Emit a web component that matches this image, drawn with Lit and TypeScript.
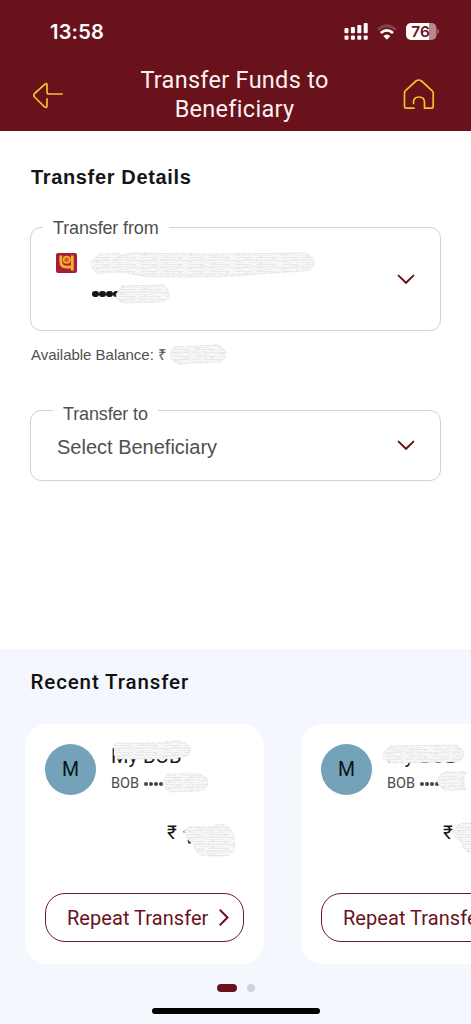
import { LitElement, html, css, svg } from "lit";
import { customElement, property } from "lit/decorators.js";

/* Grey hatched blob that hides a private value. */
@customElement("redaction-mark")
export class RedactionMark extends LitElement {
  @property() shape = "";
  @property({ type: Number }) w = 50;
  @property({ type: Number }) h = 20;

  static styles = css`
    :host { display: block; line-height: 0; }
    svg { display: block; overflow: visible; }
  `;

  render() {
    return html`<svg width=${this.w} height=${this.h} viewBox="0 0 ${this.w} ${this.h}">
      <defs>
        <pattern id="hatch" width="47" height="7" patternUnits="userSpaceOnUse">
          <rect width="47" height="7" fill="#f7f7f7" />
          <path d="M0 .5H19M22 .5H31M34 .5H47M3 4.5H20M24 4.5H45" stroke="#e6e6e6" stroke-width=".8" />
          <path d="M0 2.500H13M17 2.500H40M11 6.500H37" stroke="#eeeeee" stroke-width=".9" />
          <path d="M5 1.500H7M28 3.500H29.500M41 5.500H43M15 5.500H16" stroke="#dadada" stroke-width=".8" />
        </pattern>
      </defs>
      <path d=${this.shape} fill="url(#hatch)" stroke="#d9d9d9" stroke-width=".7" stroke-dasharray="3 1 1 1.500" stroke-linejoin="round" />
    </svg>`;
  }
}

const chevronDown = html`<svg class="chev" width="18" height="11" viewBox="0 0 18 11" fill="none">
  <path d="M1.600 1.600 9 8.800l7.400-7.200" stroke="#6a121c" stroke-width="1.900" stroke-linecap="round" stroke-linejoin="miter" />
</svg>`;

interface Mask { x: number; y: number; w: number; h: number; d: string; }

@customElement("recent-card")
export class RecentCard extends LitElement {
  @property({ attribute: false }) masks: Mask[] = [];
  @property({ type: Boolean }) specks = false;

  static styles = css`
    :host {
      position: relative; box-sizing: border-box; flex: none; width: 239px; height: 240px;
      padding: 20px 20px 22px; border-radius: 22px; background: #fff;
      display: flex; flex-direction: column; font-family: Roboto, sans-serif;
    }
    .who { display: flex; gap: 15px; height: 51px; }
    .avatar {
      width: 51px; height: 51px; border-radius: 50%; background: #74a3b9; color: #0c1215;
      display: flex; align-items: center; justify-content: center; font-size: 19.5px;
    }
    .name { font-size: 20px; line-height: 24px; color: #161616; letter-spacing: 0; }
    .bank { display: flex; align-items: center; font-size: 14.5px; line-height: 18px; color: #4c4c4c; padding-top: 6.5px; }
    .bullets { display: flex; gap: 1px; margin-left: 4.5px; }
    .bullets i { width: 4px; height: 4px; border-radius: 50%; background: #444; }
    .amount { display: flex; margin: 26px 0 0 122px; font-size: 19px; line-height: 24px; height: 24px; color: #161616; white-space: nowrap; }
    .amount svg { margin: 8px 0 0 5.5px; }
    .repeat {
      margin-top: auto; box-sizing: border-box; width: 199px; height: 49px; border-radius: 20px;
      border: 1.3px solid #6f1822; background: none; color: #6b121d; padding: 0 14px 0 21px;
      display: flex; align-items: center; justify-content: space-between;
      font: 20px Roboto, sans-serif; letter-spacing: .05px; white-space: nowrap;
    }
    .mask { position: absolute; }
  `;

  render() {
    return html`
      <div class="who">
        <div class="avatar">M</div>
        <div>
          <div class="name">My BOB</div>
          <div class="bank">BOB<span class="bullets"><i></i><i></i><i></i><i></i></span></div>
        </div>
      </div>
      <div class="amount">₹${this.specks
        ? html`<svg width="10" height="16" viewBox="0 0 10 16"><path d="M1.500 2 5 0V3.500H1.500zM5.500 11H9V14.500H6.500z" fill="#161616" /></svg>`
        : null}</div>
      <button class="repeat">Repeat Transfer
        <svg width="10" height="17" viewBox="0 0 10 17" fill="none"><path d="M1.300 1.300 8.500 8.500l-7.200 7.200" stroke="#6b121d" stroke-width="2" stroke-linecap="round" /></svg>
      </button>
      ${this.masks.map((m) => html`<redaction-mark class="mask" style="left:${m.x}px;top:${m.y}px" .w=${m.w} .h=${m.h} .shape=${m.d}></redaction-mark>`)}
    `;
  }
}

const firstMasks: Mask[] = [
  { x: 88, y: 17, w: 78, h: 18, d: "M1 5Q3 1 8 2L45 2 62 0Q72 0 77 6 79 12 74 15L60 18 5 18 1 14Z" },
  { x: 138, y: 49, w: 45, h: 20, d: "M4 2Q10 0 36 1 45 4 45 9 44 17 37 18L8 19Q1 17 0 10Z" },
  { x: 159, y: 99, w: 51, h: 34, d: "M0 8 5 4 29 4Q35-1 43 3 50 7 50 17L51 22Q50 32 42 33L20 33Q11 31 10 22L4 17Z" },
];
const secondMasks: Mask[] = [
  { x: 82, y: 21, w: 81, h: 18, d: "M7 1 73 0Q81 4 81 10 79 16 74 17L7 18Q0 15 0 9Z" },
  { x: 136, y: 48, w: 29, h: 18, d: "M0 9Q2 3 8 0L29 0 27 5V13L29 18 8 18Q2 15 0 9Z" },
  { x: 152, y: 99, w: 30, h: 30, d: "M0 9Q2 1 12 0H30V30H18Q10 28 8 18 2 17 0 9Z" },
];

@customElement("app-root")
export class AppRoot extends LitElement {
  static styles = css`
    :host {
      display: flex; flex-direction: column; width: 471px; height: 1024px; overflow: hidden;
      background: #fff; font-family: "Liberation Sans", Arial, sans-serif;
    }
    header { height: 131px; background: #69121b; color: #fff; flex: none; box-sizing: border-box; padding-top: 20px; }
    .status { display: flex; align-items: center; height: 23px; padding: 0 32px 0 50px; }
    .time { flex: 1; font: 600 20px Inter, sans-serif; letter-spacing: .2px; }
    .status svg { display: block; }
    .title-row { display: flex; justify-content: space-between; padding: 23px 36px 0 32px; }
    .title-row svg { display: block; }
    .back { margin-top: 16px; }
    .home { margin-top: 12px; }
    h1 { margin: 0; font: 400 23.5px/29px Roboto, sans-serif; letter-spacing: .28px; text-align: center; color: #fbf1f2; padding-left: 2px; }
    main { flex: none; height: 518px; box-sizing: border-box; padding: 34px 30px 0; }
    h2 { margin: 0; font-size: 20px; line-height: 24px; font-weight: 700; color: #161616; letter-spacing: .65px; }
    main h2 { padding-left: 1px; }
    .field {
      position: relative; box-sizing: border-box; border: 1.5px solid #d2d2d2; border-radius: 11px;
      display: flex; align-items: center; justify-content: space-between; padding: 0 25px;
    }
    .from { margin-top: 38px; height: 104px; }
    .to { margin-top: 46px; height: 71px; }
    .label {
      position: absolute; background: #fff; color: #505050; font-size: 18px; line-height: 20px;
      padding: 0 10px; white-space: nowrap; letter-spacing: -.14px;
    }
    .from .label { left: 12px; top: -10px; }
    .to .label { left: 22px; top: -7px; }
    .account { display: grid; grid-template-columns: 21px auto; column-gap: 14px; row-gap: 7px; align-self: start; padding-top: 25px; }
    .num { grid-column: 2; display: flex; align-items: center; padding-left: 1px; }
    .num i { width: 6.5px; height: 6.5px; margin-right: .6px; border-radius: 50%; background: #161616; }
    .num redaction-mark { margin-left: -4px; }
    .balance { display: flex; align-items: center; margin: 13px 0 0 1px; height: 20px; font-size: 15px; color: #505050; letter-spacing: -.02px; white-space: nowrap; }
    .balance redaction-mark { margin-left: 3px; }
    .choice { font-size: 20px; color: #505050; padding: 4px 0 0 1px; }
    .recent { flex: 1; background: #f4f7fe; display: flex; flex-direction: column; }
    .recent h2 { font-family: Roboto, sans-serif; font-weight: 500; font-size: 20.5px; letter-spacing: .88px; padding: 21px 0 0 30.5px; color: #111; }
    .cards { display: flex; gap: 37px; padding: 30px 0 0 25px; overflow: hidden; }
    .dots { display: flex; gap: 10px; justify-content: center; margin-top: 20px; }
    .dots b { width: 20px; height: 8px; border-radius: 4px; background: #69121b; }
    .dots i { width: 8px; height: 8px; border-radius: 50%; background: #d0d1d4; }
    .bar { width: 168px; height: 6px; border-radius: 3px; background: #000; margin: 16px auto 0; }
  `;

  render() {
    return html`
      <header>
        <div class="status">
          <span class="time">13:58</span>
          <svg width="96" height="20" viewBox="343 22 96 20">
            ${[0, 1, 2, 3].map((i) => {
              const x = 344.5 + i * 6.4;
              const tops = [28, 27, 25, 23];
              return svg`<rect x=${x} y=${tops[i]} width="4" height=${33.3 - tops[i]} rx="1" fill="#fff" /><rect x=${x} y="35.500" width="4" height="4.300" rx="1" fill="#fff" />`;
            })}
            <path d="M378 29.600Q386.800 21.800 395.800 29.600" fill="none" stroke="#86404b" stroke-width="2.800" />
            <path d="M380.800 33Q386.800 27.600 393 33" fill="none" stroke="#fff" stroke-width="2.700" />
            <path d="M383.300 36Q386.800 33 390.400 36L386.800 39.700Z" fill="#fff" />
            <path d="M411 23h18v17h-18a5 5 0 0 1-5-5v-7a5 5 0 0 1 5-5z" fill="#fff" />
            <path d="M429 23h2.500a5 5 0 0 1 5 5v7a5 5 0 0 1-5 5h-2.500z" fill="#b98791" />
            <path d="M437.500 28.800q1.400 1 1.400 2.700t-1.400 2.700z" fill="#b98791" />
            <text x="411.300" y="37" textLength="18.500" lengthAdjust="spacingAndGlyphs" font-family="Inter, sans-serif" font-weight="600" font-size="15" fill="#69121b">76</text>
          </svg>
        </div>
        <div class="title-row">
          <svg class="back" width="32" height="28" viewBox="32 82 32 28" fill="none" stroke="#f0c22f" stroke-width="1.700" stroke-linecap="round" stroke-linejoin="round">
            <path d="M62 94H49Q47 94 47 92V85Q47 82.600 45 84.200L34.600 93.500Q33 95.200 34.600 97L44.500 106.800Q47 108.600 47 105.500V98.800" />
          </svg>
          <h1>Transfer Funds to<br />Beneficiary</h1>
          <svg class="home" width="32" height="32" viewBox="403 78 32 32" fill="none" stroke="#f0c22f" stroke-width="1.700" stroke-linecap="round" stroke-linejoin="round">
            <path d="M414 108.200H406Q404.500 108.200 404.500 106.500V93Q404.500 91.500 405.500 90.600L416 81Q418.700 79 421.500 81L432 90.600Q433.200 91.600 433.200 93V106.500Q433.200 108.200 431.500 108.200H424.500V102.500Q424.500 97 419 97T413.500 102.500V103.500" />
          </svg>
        </div>
      </header>
      <main>
        <h2>Transfer Details</h2>
        <div class="field from">
          <span class="label">Transfer from</span>
          <div class="account">
            <svg class="logo" width="21" height="20" viewBox="0 0 21 20">
              <rect width="21" height="20" rx="2" fill="#a71e3b" />
              <path d="M4.800 2.500V8.500Q5 14 10 14H17M16.300 2.500V17.500" fill="none" stroke="#f6ad27" stroke-width="2.900" />
              <circle cx="10.700" cy="6.800" r="3.200" fill="#d85a30" stroke="#f6ad27" stroke-width="1.600" />
            </svg>
            <redaction-mark .w=${223} .h=${25} shape="M8 1 27 0 30 2 40 0 120 1 213 0Q223 3 223 10T214 18L165 21 148 23 110 24H58L36 20 22 19 8 21Q0 17 0 9Z"></redaction-mark>
            <div class="num"><i></i><i></i><i></i><i></i>
              <redaction-mark .w=${53} .h=${18} shape="M6 1 47 0Q53 4 53 10 52 16 46 17L6 18Q0 15 0 9Z"></redaction-mark>
            </div>
          </div>
          ${chevronDown}
        </div>
        <div class="balance">Available Balance: ₹
          <redaction-mark .w=${56} .h=${19} shape="M4 2 24 1 48 0Q56 4 56 9 55 16 48 17L8 19Q0 16 0 9Z"></redaction-mark>
        </div>
        <div class="field to">
          <span class="label">Transfer to</span>
          <span class="choice">Select Beneficiary</span>
          ${chevronDown}
        </div>
      </main>
      <section class="recent">
        <h2>Recent Transfer</h2>
        <div class="cards">
          <recent-card .masks=${firstMasks} specks></recent-card>
          <recent-card .masks=${secondMasks}></recent-card>
        </div>
        <div class="dots"><b></b><i></i></div>
        <div class="bar"></div>
      </section>
    `;
  }
}
